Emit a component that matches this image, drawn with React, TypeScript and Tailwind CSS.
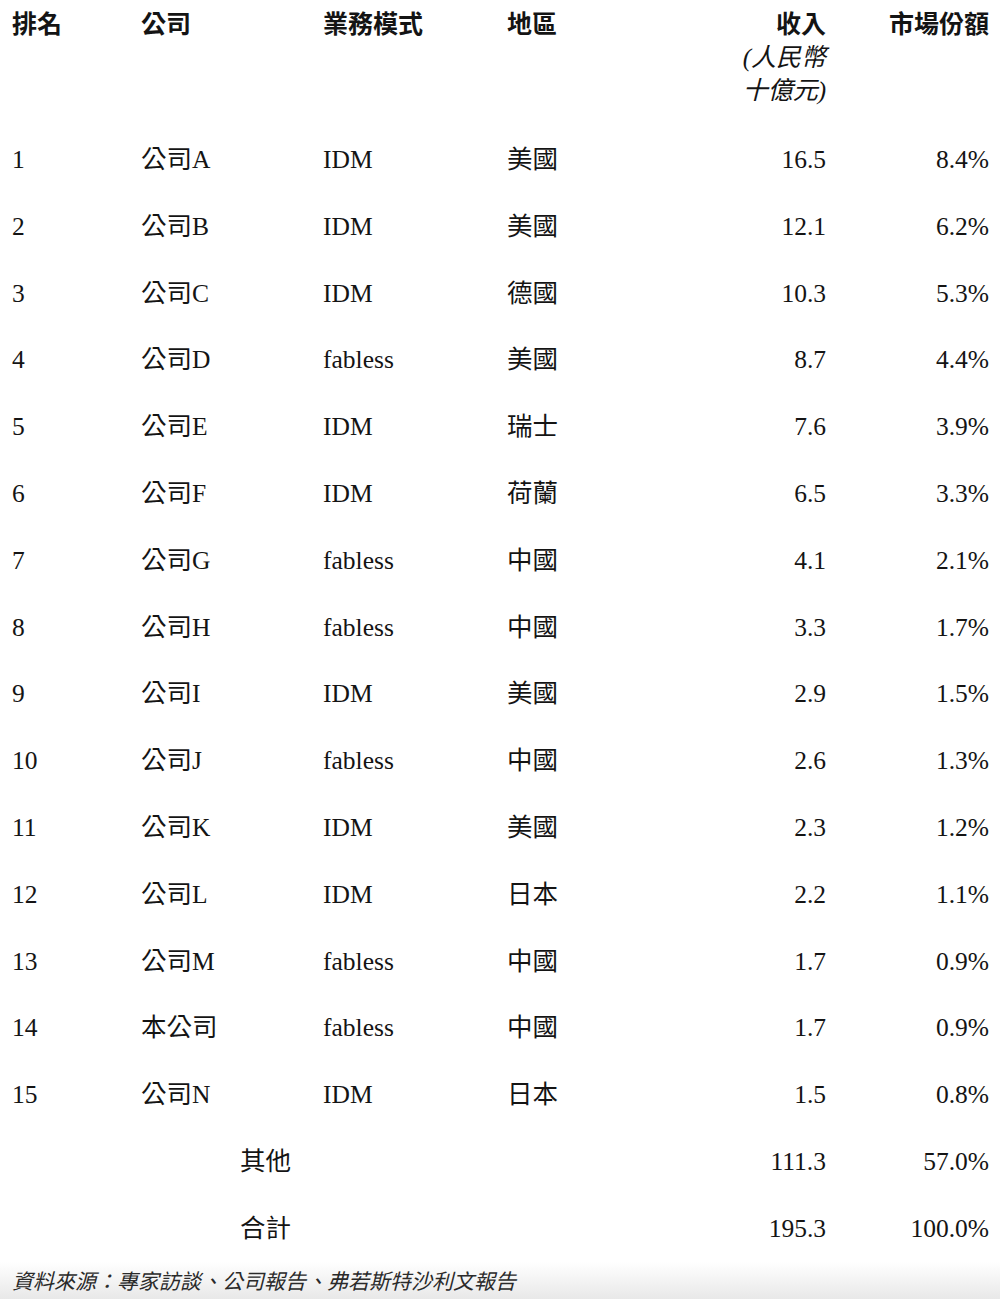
import React from 'react';

const rows = [
  ['1', '公司A', 'IDM', '美國', '16.5', '8.4%'],
  ['2', '公司B', 'IDM', '美國', '12.1', '6.2%'],
  ['3', '公司C', 'IDM', '德國', '10.3', '5.3%'],
  ['4', '公司D', 'fabless', '美國', '8.7', '4.4%'],
  ['5', '公司E', 'IDM', '瑞士', '7.6', '3.9%'],
  ['6', '公司F', 'IDM', '荷蘭', '6.5', '3.3%'],
  ['7', '公司G', 'fabless', '中國', '4.1', '2.1%'],
  ['8', '公司H', 'fabless', '中國', '3.3', '1.7%'],
  ['9', '公司I', 'IDM', '美國', '2.9', '1.5%'],
  ['10', '公司J', 'fabless', '中國', '2.6', '1.3%'],
  ['11', '公司K', 'IDM', '美國', '2.3', '1.2%'],
  ['12', '公司L', 'IDM', '日本', '2.2', '1.1%'],
  ['13', '公司M', 'fabless', '中國', '1.7', '0.9%'],
  ['14', '本公司', 'fabless', '中國', '1.7', '0.9%'],
  ['15', '公司N', 'IDM', '日本', '1.5', '0.8%'],
];

const totals = [
  ['其他', '111.3', '57.0%'],
  ['合計', '195.3', '100.0%'],
];

const grid = 'grid grid-cols-[129px_182px_184px_150px_169px_163px]';

const App = () => {
  return (
    <div
      className="w-[1000px] min-h-[1299px] bg-white text-[#141414] flex flex-col"
      style={{ fontFamily: '"Liberation Serif", "Noto Sans CJK TC", serif' }}
    >
      <div className="px-[12px] flex-1">
        {/* header */}
        <div className={`${grid} h-[126.6px] pt-[8px] text-[25px] leading-[33px]`}>
          <div className="font-bold">排名</div>
          <div className="font-bold">公司</div>
          <div className="font-bold">業務模式</div>
          <div className="font-bold">地區</div>
          <div className="text-right">
            <div className="font-bold">收入</div>
            <div className="italic">(人民幣</div>
            <div className="italic">十億元)</div>
          </div>
          <div className="text-right font-bold">市場份額</div>
        </div>

        {rows.map((r) => (
          <div key={r[0]} className={`${grid} h-[66.8px] items-center text-[25.5px] leading-[28px]`}>
            <div>{r[0]}</div>
            <div>{r[1]}</div>
            <div>{r[2]}</div>
            <div>{r[3]}</div>
            <div className="text-right">{r[4]}</div>
            <div className="text-right">{r[5]}</div>
          </div>
        ))}

        {totals.map((t) => (
          <div key={t[0]} className={`${grid} h-[66.8px] items-center text-[25.5px] leading-[28px]`}>
            <div className="col-span-3 pl-[228px]">{t[0]}</div>
            <div></div>
            <div className="text-right">{t[1]}</div>
            <div className="text-right">{t[2]}</div>
          </div>
        ))}
      </div>

      <div className="h-[37px] bg-gradient-to-b from-white to-[#e8e8e8] px-[12px] flex items-center">
        <span
          className="italic text-[21px] text-[#2a2a2a]"
          style={{ fontFamily: '"Noto Sans CJK TC", sans-serif' }}
        >
          資料來源：專家訪談、公司報告、弗若斯特沙利文報告
        </span>
      </div>
    </div>
  );
};

export default App;
